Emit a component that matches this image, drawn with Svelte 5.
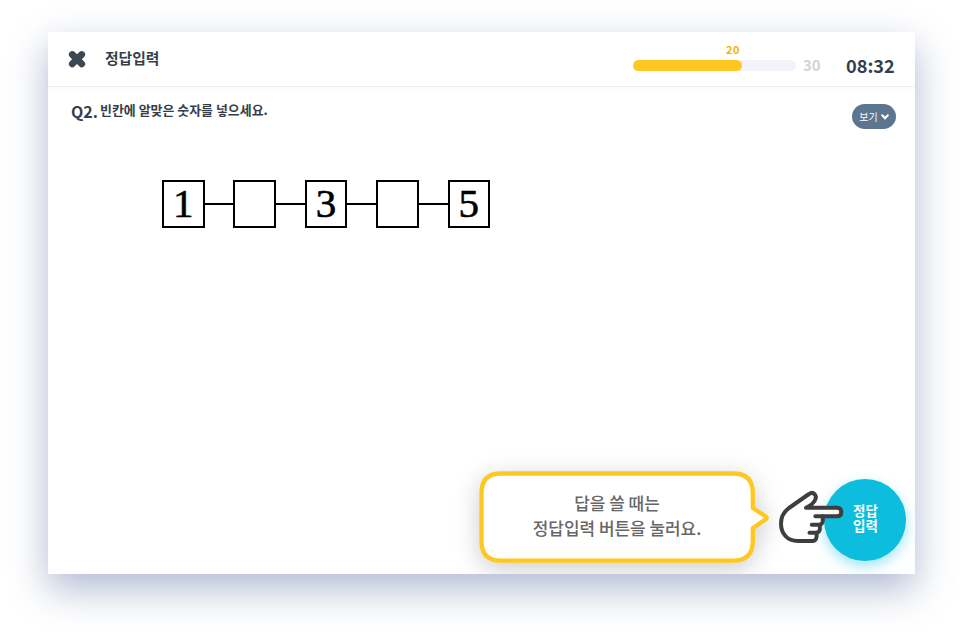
<script>
  const cells = ['1', '', '3', '', '5'];
  const current = 20;
  const total = 30;
</script>

<main class="page">
  <section class="card">
    <header>
      <button class="close" aria-label="닫기">
        <svg width="18" height="18" viewBox="0 0 18 18"><path d="M4.3 4.5 13.7 13.9M13.7 4.5 4.3 13.9" /></svg>
      </button>
      <h1>정답입력</h1>
      <div class="progress">
        <span class="now">{current}</span>
        <div class="track"><div class="fill" style="width: {(current / total) * 100}%"></div></div>
      </div>
      <span class="total">{total}</span>
      <time>08:32</time>
    </header>

    <div class="question">
      <span class="number">Q2.</span>
      <p>빈칸에 알맞은 숫자를 넣으세요.</p>
      <button class="view">
        <span>보기</span>
        <svg width="8" height="6" viewBox="0 0 8 6"><path d="M1.2 1.3 4 4.2 6.8 1.3" /></svg>
      </button>
    </div>

    <div class="chain">
      {#each cells as cell, i}
        {#if i > 0}<i class="link"></i>{/if}
        <div class="cell">{cell}</div>
      {/each}
    </div>

    <div class="guide">
      <div class="bubble">
        <svg class="outline" width="292" height="96" viewBox="0 0 292 96">
          <path d="M22 2.5H254Q273.8 2.5 273.8 22V37L287 45.6Q288.5 46.8 287 48L273.8 57.2V70Q273.8 89.7 254 89.7H22Q2.5 89.7 2.5 70V22Q2.5 2.5 22 2.5Z" />
        </svg>
        <p>답을 쓸 때는<br />정답입력 버튼을 눌러요.</p>
      </div>
      <button class="answer">정답<br />입력</button>
      <svg class="hand" width="68" height="58" viewBox="0 0 68 58">
        <path d="M29 20.8H60Q64.3 21 64.3 25Q64.3 29.3 60 29.3H45.5C46.2 34 46 37.3 42.7 37.7C43.3 42.5 42.8 45.3 39.5 45.7C40 50.5 39.5 54 35.5 54H21C10 54 4 46.5 4 36.5C4 29.5 7.3 24.5 12 21L32 7Q35.2 4.6 37.8 7.4Q40 10.2 37.8 13.5Q36 17.3 29 20.8Z" />
        <path d="M38.3 29.3H45.5M34.8 37.7H42.7M32.5 45.7H39.5" />
      </svg>
    </div>
  </section>
</main>

<style>
  :global(body) { margin: 0; background: #fff; }
  .page {
    box-sizing: border-box;
    width: 964px;
    height: 639px;
    padding: 32px 49px 65px 48px;
    overflow: hidden;
    font-family: "Noto Sans CJK KR", "Noto Sans", sans-serif;
    color: #343f4b;
  }
  .card {
    position: relative;
    height: 542px;
    background: #fff;
    box-shadow: 0 15px 36px rgba(75, 98, 150, 0.44);
    display: flex;
    flex-direction: column;
  }
  button { border: 0; padding: 0; font-family: inherit; background: none; }
  h1, p { margin: 0; }
  header {
    box-sizing: border-box;
    height: 55px;
    flex: none;
    display: flex;
    align-items: flex-start;
    padding: 0 20px 0 20px;
    border-bottom: 1px solid #eaf0f6;
    box-shadow: 0 3px 6px rgba(60, 80, 120, 0.025);
  }
  .close { width: 18px; height: 18px; margin-top: 18px; }
  .close svg { display: block; }
  .close path { stroke: #3d4853; stroke-width: 6.8; stroke-linecap: round; }
  h1 { margin: 15px 0 0 19px; font-size: 14.8px; line-height: 22px; font-weight: 700; white-space: nowrap; }
  .progress { width: 163px; margin: 11px 0 0 auto; }
  .now { display: block; width: 14px; margin-left: 93px; font-size: 11px; line-height: 12px; font-weight: 700; color: #f5b400; letter-spacing: .4px; }
  .track { height: 11px; margin-top: 5px; border-radius: 6px; background: #f3f4f9; }
  .fill { height: 11px; border-radius: 6px; background: #ffc722; }
  .total { width: 18px; margin: 22px 0 0 7px; font-size: 15px; line-height: 22px; font-weight: 700; color: #d1d3d6; }
  time { width: 49px; margin: 21px 0 0 25px; font-size: 18.2px; line-height: 24px; font-weight: 700; }
  .question { height: 58px; flex: none; display: flex; align-items: flex-start; padding: 0 19px 0 23px; }
  .number { width: 26px; margin-top: 13px; font-size: 16px; line-height: 22px; font-weight: 700; white-space: nowrap; }
  .question p { margin: 14px 0 0 3px; font-size: 12.95px; line-height: 18px; font-weight: 700; white-space: nowrap; }
  .view {
    width: 44.5px; height: 25px; margin: 17px 0 0 auto; border-radius: 13px;
    background: #5d7690; color: #fff; font-size: 10px; line-height: 24px;
    display: flex; justify-content: center; align-items: center; gap: 3.5px;
    padding-left: 1px; box-sizing: border-box;
  }
  .view path { fill: none; stroke: #fff; stroke-width: 2; stroke-linecap: round; }
  .chain { display: flex; align-items: center; margin: 35px 0 0 114px; height: 48px; flex: none; }
  .cell {
    box-sizing: border-box; width: 42.6px; height: 48px; border: 2px solid #000;
    color: #000; font: 41px/43px "Liberation Serif", serif; text-align: center;
    -webkit-text-stroke: 0.6px #000;
  }
  .link { width: 28.8px; height: 2px; margin-top: -1px; background: #000; }
  .guide {
    box-sizing: border-box; margin-top: auto; height: 140px; overflow: hidden;
    width: 867px; display: flex; align-items: flex-start; padding-left: 431px;
    position: relative;
  }
  .bubble { position: relative; width: 276px; height: 92px; margin-top: 36px; flex: none; }
  .outline { position: absolute; left: 0; top: 0.5px; overflow: visible; filter: drop-shadow(0 6px 12px rgba(0, 0, 0, 0.2)); }
  .outline path { fill: #fff; stroke: #ffc722; stroke-width: 4.3; stroke-linejoin: round; }
  .bubble p { position: relative; padding-top: 20px; font-size: 16.95px; line-height: 25px; font-weight: 500; color: #666; text-align: center; white-space: nowrap; }
  .answer {
    width: 82px; height: 82px; margin: 45px 0 0 68.5px; border-radius: 50%;
    background: #0cbddd; color: #fff; font-size: 13.5px; line-height: 15px; font-weight: 700;
    box-shadow: 0 5px 13px rgba(12, 189, 221, 0.4);
    flex: none;
    padding: 0 0 4px 2px;
  }
  .hand { position: absolute; left: 729px; top: 53px; }
  .hand path { fill: #fff; stroke: #3e3e3e; stroke-width: 4; stroke-linecap: round; stroke-linejoin: round; }
  .hand path + path { fill: none; }
</style>
